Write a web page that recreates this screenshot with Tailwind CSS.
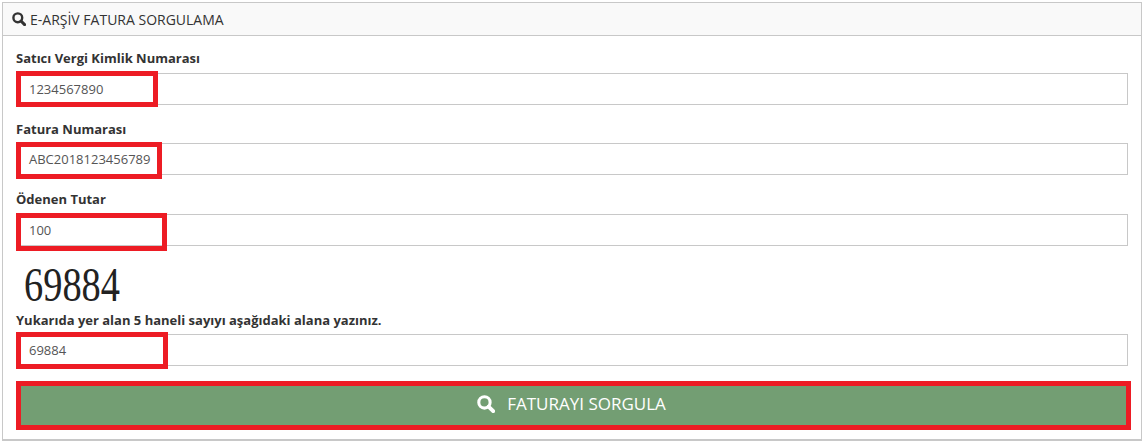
<!DOCTYPE html>
<html lang="en">
<head>
    <meta charset="UTF-8">
    <title>E-Arşiv Fatura Sorgulama</title>
    <script src="https://cdn.jsdelivr.net/npm/@tailwindcss/browser@4"></script>
</head>
<body class="bg-white font-['Open_Sans',sans-serif] text-[#333]">
    <div class="w-[1140px] h-[439px] ml-[2px] mt-[2px] border border-b-2 border-[#c8c8c8] bg-white">
        <!-- Header -->
        <div class="h-[33px] flex items-center gap-[4px] pl-[9px] bg-[#f9f9f9] border-b border-[#c8c8c8] text-[14px]">
            <svg class="w-[14px] h-[14px]" viewBox="0 0 14 14" fill="none" stroke="#333" stroke-width="2.4">
                <circle cx="5.8" cy="5.8" r="4.4"></circle>
                <path d="M9 9l3.6 3.6" stroke-width="3" stroke-linecap="round"></path>
            </svg>
            <span>E-ARŞİV FATURA SORGULAMA</span>
        </div>

        <!-- Form -->
        <div class="pl-[13px] pr-[13px] pt-[12px]">
            <label class="block h-[20px] mb-[5px] text-[13px] leading-[20px] font-bold">Satıcı Vergi Kimlik Numarası</label>
            <div class="relative mb-[14px]">
                <div class="h-[32px] border border-[#c8c8c8] pl-[12px] text-[13px] leading-[30px] text-[#555]">1234567890</div>
                <div class="absolute left-0 top-[-2px] w-[142px] h-[36px] border-[5px] border-[#ed1c24]"></div>
            </div>

            <label class="block h-[20px] mb-[4px] text-[13px] leading-[20px] font-bold">Fatura Numarası</label>
            <div class="relative mb-[14px]">
                <div class="h-[32px] border border-[#c8c8c8] pl-[12px] text-[13px] leading-[30px] text-[#555]">ABC2018123456789</div>
                <div class="absolute left-0 top-[-1px] w-[146px] h-[37px] border-[5px] border-[#ed1c24]"></div>
            </div>

            <label class="block h-[20px] mb-[5px] text-[13px] leading-[20px] font-bold">Ödenen Tutar</label>
            <div class="relative">
                <div class="h-[32px] border border-[#c8c8c8] pl-[12px] text-[13px] leading-[30px] text-[#555]">100</div>
                <div class="absolute left-0 top-[-1px] w-[151px] h-[38px] border-[5px] border-[#ed1c24]"></div>
            </div>

            <!-- Captcha -->
            <div class="h-[64px] pl-[8px] pt-[19px] font-['Liberation_Serif',serif] text-[48px] leading-[40px] text-[#222]">
                <div class="origin-left scale-x-[0.8] w-max">69884</div>
            </div>

            <label class="block h-[20px] mb-[4px] text-[13px] leading-[20px] font-bold">Yukarıda yer alan 5 haneli sayıyı aşağıdaki alana yazınız.</label>
            <div class="relative mb-[15px]">
                <div class="h-[32px] border border-[#c8c8c8] pl-[12px] text-[13px] leading-[30px] text-[#555]">69884</div>
                <div class="absolute left-0 top-[-2px] w-[152px] h-[37px] border-[5px] border-[#ed1c24]"></div>
            </div>

            <!-- Button -->
            <div class="w-[1115px] h-[49px] border-[5px] border-[#ed1c24] bg-[#739e73] flex items-center justify-center gap-[12px] pr-[4px] pb-[3px] text-white text-[17px]">
                <svg class="w-[18px] h-[18px]" viewBox="0 0 14 14" fill="none" stroke="#fff" stroke-width="2.4">
                    <circle cx="5.8" cy="5.8" r="4.4"></circle>
                    <path d="M9 9l3.6 3.6" stroke-width="3" stroke-linecap="round"></path>
                </svg>
                <span>FATURAYI SORGULA</span>
            </div>
        </div>
    </div>
</body>
</html>
